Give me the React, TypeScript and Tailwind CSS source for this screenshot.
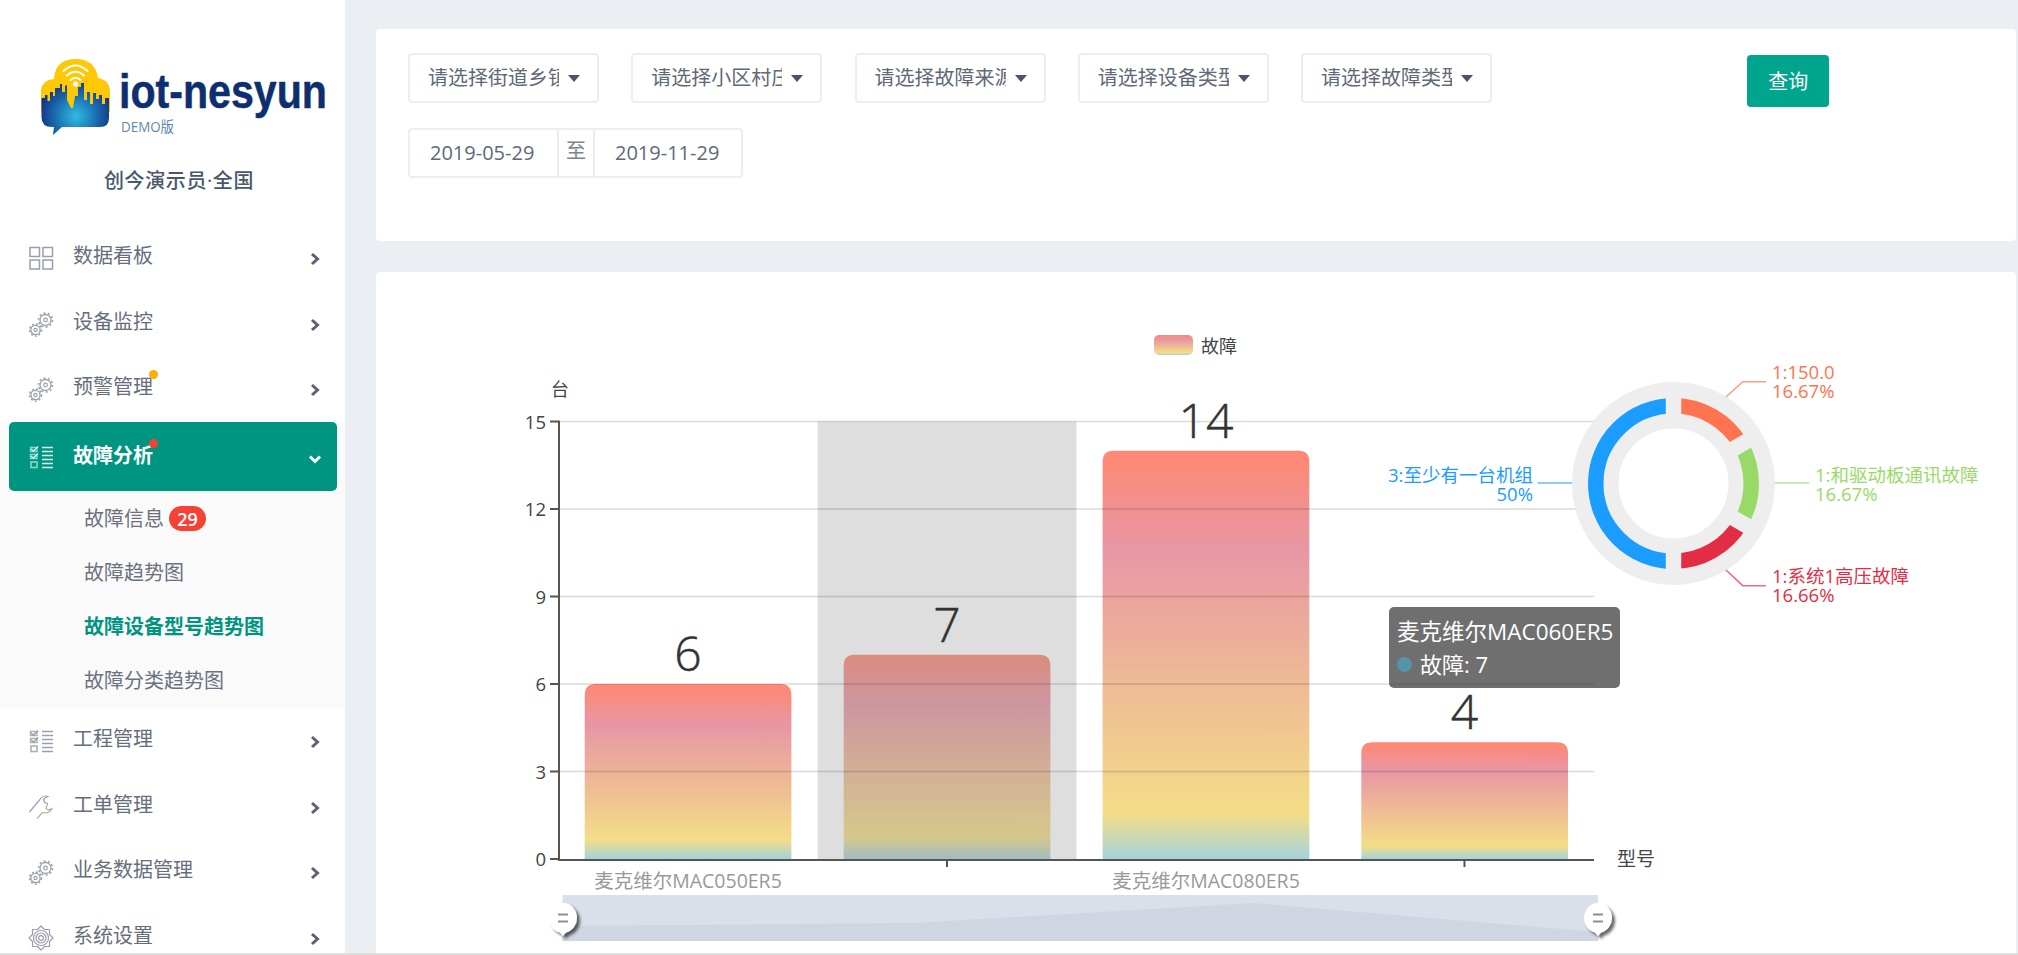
import React from "react";

const GRAY = "#9a9eae";

function Chevron({ down = false, white = false }: { down?: boolean; white?: boolean }) {
  const c = white ? "#ffffff" : "#5c6370";
  return (
    <svg width="14" height="14" viewBox="0 0 14 14" className="shrink-0">
      {down ? (
        <path d="M2 4.5 L7 9.5 L12 4.5" fill="none" stroke={c} strokeWidth="3" />
      ) : (
        <path d="M4 2 L9.5 7 L4 12" fill="none" stroke={c} strokeWidth="3" />
      )}
    </svg>
  );
}

function GridIcon() {
  return (
    <svg width="26" height="26" viewBox="0 0 26 26" fill="none" stroke={GRAY} strokeWidth="1.5">
      <rect x="2" y="2.5" width="9.5" height="9" />
      <rect x="15" y="2.5" width="9.5" height="9" />
      <rect x="2" y="15" width="9.5" height="9" />
      <rect x="15" y="15" width="9.5" height="9" />
    </svg>
  );
}

function GearsIcon() {
  return (
    <svg width="26" height="26" viewBox="0 0 26 26" fill="none" stroke={GRAY}>
      <circle cx="17.5" cy="9" r="5.5" strokeWidth="1.3" />
      <circle cx="17.5" cy="9" r="7" strokeWidth="1.6" strokeDasharray="2 2.4" />
      <circle cx="17.5" cy="9" r="1.8" strokeWidth="1.2" />
      <circle cx="7.5" cy="19" r="4.6" strokeWidth="1.3" />
      <circle cx="7.5" cy="19" r="6" strokeWidth="1.5" strokeDasharray="2 2" />
      <circle cx="7.5" cy="19" r="1.6" strokeWidth="1.2" />
    </svg>
  );
}

function ListIcon({ light = false }: { light?: boolean }) {
  const a = light ? "#d7f3ec" : "#9a9eae";
  const b = light ? "#7fdcc6" : "#a9b3a9";
  return (
    <svg width="26" height="26" viewBox="0 0 26 26" fill="none">
      <path d="M14 3.5H25M14 7.5H25M14 11.5H25M14 15.5H25M14 19.5H25M14 23.5H25" stroke={a} strokeWidth="1.4" />
      <path d="M2.5 3.5H9V7.5H2.5Z M2.5 10.5H9V14.5H2.5Z" stroke={b} strokeWidth="1.4" />
      <path d="M3 5 L5.5 7 L10 2.5 M3 12 L5.5 14 L10 9.5" stroke={a} strokeWidth="1.4" />
      <rect x="3" y="18" width="6" height="5.5" stroke={b} strokeWidth="1.6" />
    </svg>
  );
}

function WrenchIcon() {
  return (
    <svg width="26" height="26" viewBox="0 0 26 26" fill="none" stroke={GRAY} strokeWidth="1.2">
      <path d="M1.5 18 L12 5.5 C13.5 2.5 17 1.5 20 2.5 L15.5 5 L16.5 8.5 L20 9.5" />
      <path d="M9 24.5 L14.5 18.5 C18 19.5 23 18 24 14.5 L20.5 16 L18 14.5 L19.5 10" stroke="#c2a99a" />
    </svg>
  );
}

function FlowerIcon() {
  return (
    <svg width="26" height="26" viewBox="0 0 26 26" fill="none" stroke={GRAY} strokeWidth="1.2">
      <path d="M13 1 L16.5 4.5 L21.5 4.5 L21.5 9.5 L25 13 L21.5 16.5 L21.5 21.5 L16.5 21.5 L13 25 L9.5 21.5 L4.5 21.5 L4.5 16.5 L1 13 L4.5 9.5 L4.5 4.5 L9.5 4.5 Z" strokeLinejoin="round" />
      <circle cx="13" cy="13" r="7.5" />
      <circle cx="13" cy="13" r="5" />
      <circle cx="13" cy="13" r="2.4" />
    </svg>
  );
}

function MenuRow({ icon, label, dot }: { icon: React.ReactNode; label: string; dot?: string }) {
  return (
    <div className="flex h-[65.8px] shrink-0 items-center pl-[28px] pr-[23px]">
      <div className="flex w-[45px] shrink-0 items-center">{icon}</div>
      <span className="relative -mt-1 text-[20px] leading-none text-[#666e7c]">
        {label}
        {dot ? <span className={`absolute -right-[5px] -top-[7px] size-[9px] rounded-full ${dot}`} /> : null}
      </span>
      <div className="ml-auto mt-[2px]">
        <Chevron />
      </div>
    </div>
  );
}

function Logo() {
  return (
    <svg width="300" height="85" viewBox="35 55 300 85" className="block">
      <defs>
        <radialGradient id="lg" gradientUnits="userSpaceOnUse" cx="76" cy="116" r="38">
          <stop offset="0" stopColor="#2fbde2" />
          <stop offset="0.55" stopColor="#1b6cb0" />
          <stop offset="1" stopColor="#12307e" />
        </radialGradient>
      </defs>
      <path d="M41 112 V90 Q42 80 54 79 Q55 59 76 59 Q95 59 98 78 Q110 80 110 92 V112 Z" fill="#fec806" />
      <path
        d="M41.5 108 V98 H45 V95 H47.5 V101 H50 V92 H53 V96 H55 V88 H60 V84 H62 V92 H65 V86 L67 85 V100 L71 108 H73 L75 96 H78 V87 H81 V83 H84 V100 H87 V92 H90 V104 H93 V93 H96 V99 H99 V95 H102 V104 H105 V98 H109 V108 V118 Q109 127 100 127 H62 L53 135 L54 127 H52 Q41.5 127 41.5 117 Z"
        fill="url(#lg)"
      />
      <g fill="none" stroke="#ffffff" strokeLinecap="round">
        <path d="M63.5 71 Q75.5 60 87.5 71" strokeWidth="2" />
        <path d="M67 75.5 Q75.5 68 84 75.5" strokeWidth="2" />
        <path d="M70.5 80 Q75.5 75.5 80.5 80" strokeWidth="2" />
      </g>
      <circle cx="75.5" cy="84" r="2.6" fill="#ffffff" />
      <text
        x="119"
        y="108"
        textLength="208"
        lengthAdjust="spacingAndGlyphs"
        fontSize="48"
        fontWeight="700"
        fill="#0e2f6f"
        stroke="#0e2f6f"
        strokeWidth="0.5"
        strokeLinejoin="round"
        className="font-['Liberation_Sans',sans-serif]"
      >
        iot-nesyun
      </text>
      <text x="121" y="132" fontSize="14.5" fill="#5c8aa8" textLength="53" lengthAdjust="spacingAndGlyphs">
        DEMO版
      </text>
    </svg>
  );
}

function Sidebar() {
  return (
    <aside className="flex w-[345px] shrink-0 flex-col overflow-hidden bg-white">
      <div className="ml-[35px] mt-[55px] shrink-0">
        <Logo />
      </div>
      <div className="mt-[26px] shrink-0 pl-[104px] text-[20px] font-medium leading-[30px] tracking-[0.6px] text-[#4a586c]">创今演示员·全国</div>
      <div className="h-[29px] shrink-0" />
      <MenuRow icon={<GridIcon />} label="数据看板" />
      <MenuRow icon={<GearsIcon />} label="设备监控" />
      <MenuRow icon={<GearsIcon />} label="预警管理" dot="bg-[#ffae00]" />
      <div className="shrink-0 bg-[#fafafa]">
        <div className="ml-[9px] mr-[8px] flex h-[68.5px] items-center rounded-[5px] bg-[#009580] pl-[19px] pr-[15px]">
          <div className="flex w-[45px] shrink-0 items-center">
            <ListIcon light />
          </div>
          <span className="relative -mt-[2px] text-[20px] font-bold leading-none text-white">
            故障分析
            <span className="absolute -right-[5px] -top-[7px] size-[9px] rounded-full bg-[#f44336]" />
          </span>
          <div className="ml-auto mt-1">
            <Chevron down white />
          </div>
        </div>
        <div className="pl-[84px] pt-[1px] text-[20px] leading-[54px] text-[#6a7280]">
          <div className="flex h-[54px] items-center">
            <span>故障信息</span>
            <span className="ml-[5px] flex h-[25px] w-[37px] items-center justify-center rounded-full bg-[#f44336] text-[18px] font-semibold text-white">
              29
            </span>
          </div>
          <div className="h-[54px]">故障趋势图</div>
          <div className="h-[54px] font-bold text-[#009580]">故障设备型号趋势图</div>
          <div className="h-[54px]">故障分类趋势图</div>
        </div>
      </div>
      <MenuRow icon={<ListIcon />} label="工程管理" />
      <MenuRow icon={<WrenchIcon />} label="工单管理" />
      <MenuRow icon={<GearsIcon />} label="业务数据管理" />
      <MenuRow icon={<FlowerIcon />} label="系统设置" />
    </aside>
  );
}

function Select({ text }: { text: string }) {
  return (
    <div className="flex h-[50px] w-[191px] shrink-0 items-center rounded-[4px] border-2 border-[#eeeeee] pl-[18px]">
      <span className="w-[131px] overflow-hidden whitespace-nowrap text-[20px] leading-none text-[#5f6977]">{text}</span>
      <span className="ml-[9px] size-0 border-x-[6px] border-t-[7px] border-x-transparent border-t-[#4a5568]" />
    </div>
  );
}

function Filters() {
  return (
    <section className="h-[212px] rounded-[4px] bg-white pl-[32px] pt-[24px]">
      <div className="flex h-[50px] items-start gap-[32.25px]">
        <Select text="请选择街道乡镇" />
        <Select text="请选择小区村庄" />
        <Select text="请选择故障来源" />
        <Select text="请选择设备类型" />
        <Select text="请选择故障类型" />
        <button className="ml-[223px] mt-[2px] h-[52px] w-[82px] shrink-0 rounded-[4px] bg-[#00a58e] pt-[2px] text-[20px] text-white">查询</button>
      </div>
      <div className="mt-[25px] flex h-[50px] w-[335px] items-center rounded-[4px] border-2 border-[#eeeeee] text-[20px] text-[#5f6977]">
        <div className="w-[147px] pl-[20px]">2019-05-29</div>
        <div className="flex h-full w-[38px] items-center justify-center border-x-2 border-[#eeeeee] pb-1 text-[#7b8490]">至</div>
        <div className="pl-[20px]">2019-11-29</div>
      </div>
    </section>
  );
}

const Y0 = 859;
const UNIT = 437.5 / 15;

function barPath(x: number, value: number, w = 206.7, r = 11) {
  const top = Y0 - value * UNIT;
  return `M${x} ${Y0} V${top + r} Q${x} ${top} ${x + r} ${top} H${x + w - r} Q${x + w} ${top} ${x + w} ${top + r} V${Y0} Z`;
}

function polar(r: number, deg: number) {
  const a = (deg * Math.PI) / 180;
  return [1673.5 + r * Math.sin(a), 483.5 - r * Math.cos(a)];
}

function arc(from: number, to: number) {
  const r = 77.75;
  const [x1, y1] = polar(r, from);
  const [x2, y2] = polar(r, to);
  const large = to - from > 180 ? 1 : 0;
  return `M${x1} ${y1} A${r} ${r} 0 ${large} 1 ${x2} ${y2}`;
}

function Handle({ cx }: { cx: number }) {
  return (
    <g filter="url(#hs)">
      <path d={`M${cx - 14} 918 A14 15 0 0 1 ${cx + 14} 918 A14 15 0 0 1 ${cx + 3} 932.5 L${cx} 936 L${cx - 3} 932.5 A14 15 0 0 1 ${cx - 14} 918 Z`} fill="#ffffff" />
      <path d={`M${cx - 5} 914.5 H${cx + 5} M${cx - 5} 921.5 H${cx + 5}`} stroke="#8f8f8f" strokeWidth="2" />
    </g>
  );
}

function Chart() {
  const bars = [
    { x: 584.7, v: 6, fill: "url(#bar)", cx: 688 },
    { x: 843.7, v: 7, fill: "url(#barHover)", cx: 947 },
    { x: 1102.6, v: 14, fill: "url(#bar)", cx: 1206 },
    { x: 1361.3, v: 4, fill: "url(#bar)", cx: 1464.5 },
  ];
  const yTicks = [0, 3, 6, 9, 12, 15];
  const sep = [0, 60, 120, 180];
  return (
    <svg width="1640" height="681" viewBox="376 272 1640 681" className="block">
      <defs>
        <linearGradient id="bar" x1="0" y1="0" x2="0" y2="1">
          <stop offset="0" stopColor="#ff8872" />
          <stop offset="0.24" stopColor="#e896a4" />
          <stop offset="0.89" stopColor="#f4dd87" />
          <stop offset="1" stopColor="#a3d3de" />
        </linearGradient>
        <linearGradient id="barHover" x1="0" y1="0" x2="0" y2="1">
          <stop offset="0" stopColor="#da8c7e" />
          <stop offset="0.24" stopColor="#cd96a0" />
          <stop offset="0.89" stopColor="#d6c88c" />
          <stop offset="1" stopColor="#a2bcc0" />
        </linearGradient>
        <filter id="hs" x="-50%" y="-50%" width="200%" height="200%">
          <feDropShadow dx="3" dy="3" stdDeviation="1.8" floodColor="#000000" floodOpacity="0.6" />
        </filter>
      </defs>

      <rect x="1154" y="335" width="39" height="20" rx="5" fill="url(#bar)" />
      <text x="1201" y="353" fontSize="18" fill="#444444">故障</text>

      <rect x="817.6" y="421.7" width="258.8" height="437.3" fill="#dedede" />
      {bars.map((b) => (
        <path key={b.x} d={barPath(b.x, b.v)} fill={b.fill} />
      ))}
      {yTicks.slice(1).map((t) => (
        <line key={t} x1="559" x2="1594" y1={Y0 - t * UNIT} y2={Y0 - t * UNIT} stroke="#000000" strokeOpacity="0.15" strokeWidth="1.6" />
      ))}

      <path d="M559 420.7 V860 H1594" fill="none" stroke="#555555" strokeWidth="2" />
      {yTicks.map((t) => (
        <g key={t}>
          <line x1="550" x2="559" y1={Y0 - t * UNIT} y2={Y0 - t * UNIT} stroke="#555555" strokeWidth="2" />
          <text x="546" y={Y0 - t * UNIT + 7} textAnchor="end" fontSize="18.5" fill="#444444">{t}</text>
        </g>
      ))}
      <line x1="947" x2="947" y1="860" y2="867" stroke="#555555" strokeWidth="2" />
      <line x1="1464.5" x2="1464.5" y1="860" y2="867" stroke="#555555" strokeWidth="2" />
      <text x="551" y="396" fontSize="18" fill="#444444">台</text>
      <text x="1617" y="866" fontSize="19" fill="#444444">型号</text>

      {bars.map((b) => (
        <text key={b.cx} x={b.cx} y={Y0 - b.v * UNIT - 13} textAnchor="middle" fontSize="48" fontWeight="300" fill="#333333" stroke="#333333" strokeWidth="0.5">{b.v}</text>
      ))}

      <text x="688" y="888" textAnchor="middle" fontSize="19.5" fill="#999999">麦克维尔MAC050ER5</text>
      <text x="1206" y="888" textAnchor="middle" fontSize="19.5" fill="#999999">麦克维尔MAC080ER5</text>

      <rect x="562.5" y="895" width="1035.5" height="46" fill="#d9e0ea" />
      <path d="M562.5 926 L913 923 L1253 903 L1598 932 V941 H562.5 Z" fill="#cfd6e1" />
      <Handle cx={563} />
      <Handle cx={1598} />

      <circle cx="1673.5" cy="483.5" r="78.25" fill="none" stroke="#eeeeee" strokeWidth="46.5" />
      <path d={arc(0, 60)} fill="none" stroke="#ff7350" strokeWidth="15.5" />
      <path d={arc(60, 120)} fill="none" stroke="#99d968" strokeWidth="15.5" />
      <path d={arc(120, 180)} fill="none" stroke="#e32d44" strokeWidth="15.5" />
      <path d={arc(180, 360)} fill="none" stroke="#1b9cff" strokeWidth="15.5" />
      {sep.map((d) => {
        const [x1, y1] = polar(64, d);
        const [x2, y2] = polar(92, d);
        return <line key={d} x1={x1} y1={y1} x2={x2} y2={y2} stroke="#eeeeee" strokeWidth="15.5" />;
      })}

      <path d="M1726 397 L1742.7 381.7 H1766" fill="none" stroke="#ff7350" strokeOpacity="0.7" strokeWidth="1.6" />
      <path d="M1775 483 H1809" fill="none" stroke="#99d968" strokeOpacity="0.7" strokeWidth="1.6" />
      <path d="M1726 570 L1742.7 585.7 H1766" fill="none" stroke="#e32d44" strokeOpacity="0.7" strokeWidth="1.6" />
      <path d="M1537.5 483 H1572" fill="none" stroke="#1b9cff" strokeOpacity="0.7" strokeWidth="1.6" />

      <g fontSize="18.5">
        <g fill="#ff7350">
          <text x="1772" y="379">1:150.0</text>
          <text x="1772" y="398">16.67%</text>
        </g>
        <g fill="#99d968">
          <text x="1815" y="482">1:和驱动板通讯故障</text>
          <text x="1815" y="501">16.67%</text>
        </g>
        <g fill="#e32d44">
          <text x="1772" y="583">1:系统1高压故障</text>
          <text x="1772" y="602">16.66%</text>
        </g>
        <g fill="#1b9cff" textAnchor="end">
          <text x="1533" y="482">3:至少有一台机组</text>
          <text x="1533" y="501">50%</text>
        </g>
      </g>
    </svg>
  );
}

function Tooltip() {
  return (
    <div className="absolute left-[1013px] top-[335px] h-[81px] w-[231px] rounded-[5px] bg-[rgba(50,50,50,0.7)] pl-[8px] pt-[9px] text-[22.5px] leading-[32px] text-white">
      <div className="whitespace-nowrap">麦克维尔MAC060ER5</div>
      <div className="flex items-center">
        <span className="mr-[8px] size-[15px] rounded-full bg-[#5493a8]" />
        <span className="text-[22px]">故障: 7</span>
      </div>
    </div>
  );
}

export default function App() {
  return (
    <div className="flex h-[955px] w-[2018px] flex-col overflow-hidden bg-white font-['Open_Sans','Noto_Sans_CJK_SC',sans-serif]">
      <div className="flex h-[953px] w-full">
        <Sidebar />
        <main className="flex min-w-0 flex-1 flex-col bg-[#ebeef3] pl-[31px] pr-[2px] pt-[29px]">
          <Filters />
          <section className="relative mt-[31px] flex-1 overflow-hidden rounded-t-[4px] bg-white">
            <Chart />
            <Tooltip />
          </section>
        </main>
      </div>
      <div className="h-[2px] bg-[#dddddd]" />
    </div>
  );
}
